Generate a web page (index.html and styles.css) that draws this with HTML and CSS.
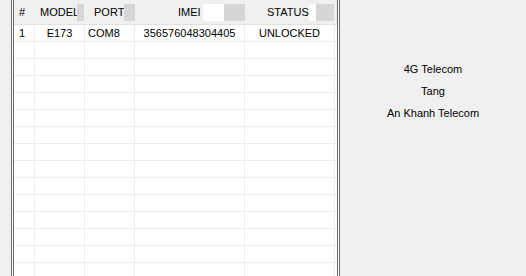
FILE: index.html
```html
<!DOCTYPE html>
<html lang="en">
<head>
	<meta charset="UTF-8">
	<title>Modem list</title>
	<link rel="stylesheet" href="styles.css">
</head>
<body>
	<div class="list">
		<div class="head">
			<div class="h c1">#</div>
			<div class="h c2">MODEL<span class="blk gray w7"></span></div>
			<div class="h c3">PORT<span class="blk gray w11"></span></div>
			<div class="h c4">IMEI<span class="blk white w21"></span><span class="blk gray w21"></span></div>
			<div class="h c5">STATUS<span class="blk white w7"></span><span class="blk gray w18"></span></div>
		</div>
		<div class="rows">
			<div class="row">
				<div class="cell c1 left">1</div>
				<div class="cell c2">E173</div>
				<div class="cell c3 left">COM8</div>
				<div class="cell c4">356576048304405</div>
				<div class="cell c5">UNLOCKED</div>
				<div class="cell c6"></div>
			</div>
			<div class="row"><div class="cell c1"></div><div class="cell c2"></div><div class="cell c3"></div><div class="cell c4"></div><div class="cell c5"></div><div class="cell c6"></div></div>
			<div class="row"><div class="cell c1"></div><div class="cell c2"></div><div class="cell c3"></div><div class="cell c4"></div><div class="cell c5"></div><div class="cell c6"></div></div>
			<div class="row"><div class="cell c1"></div><div class="cell c2"></div><div class="cell c3"></div><div class="cell c4"></div><div class="cell c5"></div><div class="cell c6"></div></div>
			<div class="row"><div class="cell c1"></div><div class="cell c2"></div><div class="cell c3"></div><div class="cell c4"></div><div class="cell c5"></div><div class="cell c6"></div></div>
			<div class="row"><div class="cell c1"></div><div class="cell c2"></div><div class="cell c3"></div><div class="cell c4"></div><div class="cell c5"></div><div class="cell c6"></div></div>
			<div class="row"><div class="cell c1"></div><div class="cell c2"></div><div class="cell c3"></div><div class="cell c4"></div><div class="cell c5"></div><div class="cell c6"></div></div>
			<div class="row"><div class="cell c1"></div><div class="cell c2"></div><div class="cell c3"></div><div class="cell c4"></div><div class="cell c5"></div><div class="cell c6"></div></div>
			<div class="row"><div class="cell c1"></div><div class="cell c2"></div><div class="cell c3"></div><div class="cell c4"></div><div class="cell c5"></div><div class="cell c6"></div></div>
			<div class="row"><div class="cell c1"></div><div class="cell c2"></div><div class="cell c3"></div><div class="cell c4"></div><div class="cell c5"></div><div class="cell c6"></div></div>
			<div class="row"><div class="cell c1"></div><div class="cell c2"></div><div class="cell c3"></div><div class="cell c4"></div><div class="cell c5"></div><div class="cell c6"></div></div>
			<div class="row"><div class="cell c1"></div><div class="cell c2"></div><div class="cell c3"></div><div class="cell c4"></div><div class="cell c5"></div><div class="cell c6"></div></div>
			<div class="row"><div class="cell c1"></div><div class="cell c2"></div><div class="cell c3"></div><div class="cell c4"></div><div class="cell c5"></div><div class="cell c6"></div></div>
			<div class="row"><div class="cell c1"></div><div class="cell c2"></div><div class="cell c3"></div><div class="cell c4"></div><div class="cell c5"></div><div class="cell c6"></div></div>
			<div class="row"><div class="cell c1"></div><div class="cell c2"></div><div class="cell c3"></div><div class="cell c4"></div><div class="cell c5"></div><div class="cell c6"></div></div>
		</div>
	</div>
	<div class="panel">
		<div class="line">4G Telecom</div>
		<div class="line">Tang</div>
		<div class="line">An Khanh Telecom</div>
	</div>
</body>
</html>
```

FILE: styles.css
```css
*{
	padding: 0;
	margin: 0;
	box-sizing: border-box;
}
body{
	background-color: #f0f0f0;
	font-family: "Liberation Sans", Arial, sans-serif;
	font-size: 11px;
	color: #000;
	display: flex;
	height: 276px;
	overflow: hidden;
}
.list{
	margin-left: 11px;
	width: 329px;
	height: 276px;
	border-left: 3px double #6a6a6a;
	border-right: 3px double #6a6a6a;
	background-color: #fff;
	overflow: hidden;
}
.head{
	display: flex;
	height: 25px;
	background-color: #f0f0f0;
	border-bottom: 1px solid #e2e2e2;
}
.h{
	display: flex;
	align-items: center;
	height: 24px;
	white-space: nowrap;
}
.head .c1{ width: 21px; padding-left: 5px; }
.head .c2{ width: 50px; padding-left: 5px; }
.head .c3{ width: 50px; padding-left: 9px; }
.head .c4{ width: 110px; padding-left: 43px; }
.head .c5{ width: 90px; padding-left: 22px; }
.blk{
	display: inline-block;
	height: 17px;
}
.gray{ background-color: #d6d6d6; }
.white{ background-color: #fff; }
.w7{ width: 7px; }
.w11{ width: 11px; }
.w18{ width: 18px; }
.w21{ width: 21px; }
.c2 .blk{ margin-left: -2px; }
.c4 .white{ margin-left: 2px; }

.row{
	display: flex;
	height: 17px;
	border-bottom: 1px solid #ececec;
}
.cell{
	height: 16px;
	line-height: 16px;
	text-align: center;
	border-right: 1px solid #ececec;
	white-space: nowrap;
}
.cell.left{ text-align: left; }
.row .c1{ width: 21px; padding-left: 5px; }
.row .c2{ width: 50px; }
.row .c3{ width: 50px; padding-left: 3px; }
.row .c4{ width: 110px; }
.row .c5{ width: 90px; }
.row .c6{ width: 2px; border-right: none; }

.panel{
	flex: 1;
	display: flex;
	flex-direction: column;
	align-items: center;
	padding-top: 63px;
	gap: 9px;
}
.line{
	height: 13px;
	line-height: 13px;
}
```
